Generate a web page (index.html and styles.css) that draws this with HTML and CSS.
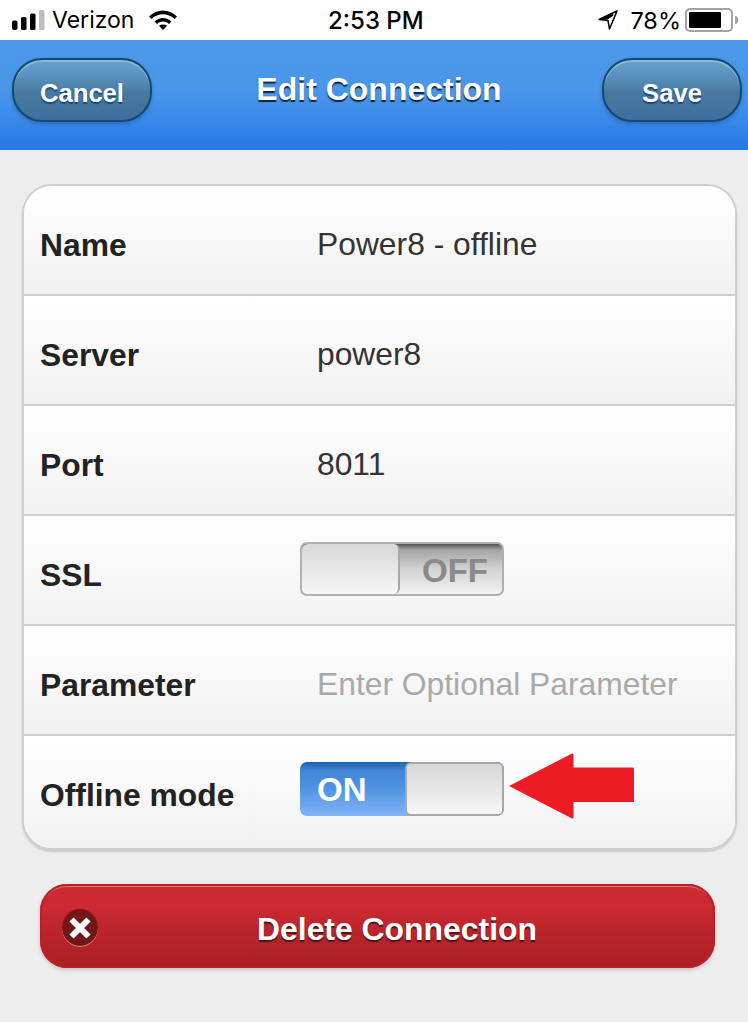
FILE: index.html
```html
<!DOCTYPE html>
<html lang="en">
<head>
<meta charset="utf-8">
<title>Edit Connection</title>
<link rel="stylesheet" href="styles.css">
</head>
<body>
<div class="status">
  <div class="status-left">
    <svg class="signal" width="34" height="22" viewBox="0 0 34 22"><rect x="0" y="11.500" width="5.500" height="9.500" rx="2" fill="#000"/><rect x="9" y="8" width="5.500" height="13" rx="1.500" fill="#000"/><rect x="18" y="4.500" width="5.500" height="16.500" rx="1.500" fill="#000"/><rect x="27" y="1" width="5.500" height="20" rx="1.500" fill="#bdbdbd"/></svg>
    <span class="carrier">Verizon</span>
    <svg class="wifi" width="30" height="22" viewBox="0 0 30 22"><path d="M1 7.500C9-.5 21-.5 29 7.500L26.500 10C19.800 3.800 10.200 3.800 3.500 10Z" fill="#000"/><path d="M6.500 12.500C11.500 7.800 18.500 7.800 23.500 12.500L21 15C17 11.800 13 11.800 9 15Z" fill="#000"/><path d="M11 16.800C13.500 14.900 16.500 14.900 19 16.800L15 21Z" fill="#000"/></svg>
  </div>
  <div class="clock">2:53 PM</div>
  <div class="status-right">
    <svg class="loc" width="20" height="20" viewBox="0 0 20 20"><path d="M19 1L1 9.500L10 10.500L11.500 19Z M14.800 5L9.500 8.500L4.500 8.700Z" fill="none" stroke="#000" stroke-width="1.500" stroke-linejoin="round"/></svg>
    <span class="pct">78%</span>
    <span class="battery"><span class="battery-fill"></span></span>
    <span class="battery-tip"></span>
  </div>
</div>

<header class="topbar">
  <button class="nav-btn">Cancel</button>
  <h1 class="title">Edit Connection</h1>
  <button class="nav-btn">Save</button>
</header>

<main class="content">
  <section class="card">
    <div class="row"><div class="label">Name</div><div class="value">Power8 - offline</div></div>
    <div class="row"><div class="label">Server</div><div class="value">power8</div></div>
    <div class="row"><div class="label">Port</div><div class="value">8011</div></div>
    <div class="row"><div class="label">SSL</div>
      <div class="toggle toggle-off"><span class="knob"></span><span class="toggle-text">OFF</span></div>
    </div>
    <div class="row"><div class="label">Parameter</div><div class="value placeholder">Enter Optional Parameter</div></div>
    <div class="row"><div class="label">Offline mode</div>
      <div class="toggle toggle-on"><span class="toggle-text">ON</span><span class="knob"></span></div>
    </div>
  </section>

  <button class="delete">
    <span class="delete-icon"><svg width="24" height="24" viewBox="0 0 24 24"><path d="M12 12L3.500 3.500M12 12L20.500 3.500M12 12L3.500 20.500M12 12L20.500 20.500" stroke="#fff" stroke-width="6" fill="none"/></svg></span>
    <span class="delete-text">Delete Connection</span>
  </button>
</main>

<svg class="arrow" width="128" height="68" viewBox="0 0 128 68"><path d="M1 34L64 1.500Q65.500 1 65.500 3V15.500H125Q126 15.500 126 17V50H65.500V65Q65.500 67 64 66.500Z" fill="#ed1c24"/></svg>
</body>
</html>
```
FILE: styles.css
```css
* { box-sizing: border-box; }
html, body { margin: 0; padding: 0; }
body {
  width: 748px;
  height: 1022px;
  overflow: hidden;
  position: relative;
  background: #ededed;
  font-family: "Liberation Sans", Arial, sans-serif;
}
.status {
  height: 40px;
  background: #fff;
  display: flex;
  align-items: center;
  justify-content: space-between;
  color: #000;
  position: relative;
}
.status-left { display: flex; align-items: center; padding-left: 12px; }
.carrier { margin-left: 6px; font-family: "Inter", "Liberation Sans", sans-serif; font-size: 23px; }
.wifi { margin-left: 14px; }
.clock {
  position: absolute;
  left: 328px;
  top: 6px;
  font-family: "Inter", "Liberation Sans", sans-serif;
  font-weight: 500;
  font-size: 24px;
}
.status-right { display: flex; align-items: center; padding-right: 10px; }
.pct { margin-left: 12px; font-family: "Inter", "Liberation Sans", sans-serif; font-size: 23.500px; }
.battery {
  margin-left: 4px;
  width: 48px;
  height: 24px;
  border: 2px solid #a3a3a3;
  border-radius: 5px;
  padding: 2px;
  display: block;
}
.battery-fill { display: block; width: 32px; height: 16px; background: #000; border-radius: 1px; }
.battery-tip {
  width: 3px;
  height: 8px;
  margin-left: 2px;
  background: #a3a3a3;
  border-radius: 0 3px 3px 0;
}
.topbar {
  height: 110px;
  background: linear-gradient(#4b97e8 0%, #4a97ea 45%, #3c8aea 70%, #2478e4 100%);
  display: flex;
  justify-content: space-between;
  align-items: flex-start;
  padding: 18px 6px 0 12px;
}
.nav-btn {
  width: 140px;
  height: 64px;
  border: 2px solid #0f4a70;
  border-radius: 30px;
  background: linear-gradient(#6aa0cb 0%, #5a93c0 25%, #47799f 55%, #3f6e9e 100%);
  box-shadow: inset 0 2px 0 rgba(255,255,255,.25), 0 2px 4px rgba(0,0,0,.2);
  color: #fff;
  font: bold 25.600px "Liberation Sans", Arial, sans-serif;
  text-shadow: 0 2px 1px rgba(10,50,100,.7);
  padding: 7px 0 0;
}
.title {
  margin: 0 0 0 4px;
  padding-top: 12px;
  color: #fff;
  font-size: 32px;
  font-weight: bold;
  line-height: 38px;
  text-shadow: 0 2px 1px rgba(0,0,0,.75);
}
.content { padding: 34px 11px 0 22px; }
.card {
  height: 666px;
  background: #fff;
  border: 2px solid #cfcfcf;
  border-radius: 30px;
  overflow: hidden;
  box-shadow: 0 2px 2px rgba(0,0,0,.14);
}
.row {
  height: 110px;
  display: flex;
  align-items: center;
  background: linear-gradient(#fff, #f1f1f1);
  border-bottom: 2px solid #cfcfcf;
  padding-left: 16px;
  position: relative;
}
.row:last-child { border-bottom: 0; height: 112px; }
.label {
  width: 260px;
  color: #222;
  font-size: 31.800px;
  font-weight: bold;
  padding-top: 10px;
}
.row:last-child .label { padding-top: 6px; }
.value {
  margin-left: 17px;
  color: #333;
  font-size: 31.800px;
  padding-top: 9px;
}
.placeholder { color: #a9a9a9; }
.toggle {
  width: 204px;
  height: 54px;
  border-radius: 7px;
  border: 2px solid #b2b2b2;
  display: flex;
  overflow: hidden;
  font-weight: bold;
  font-size: 33px;
  margin-top: -2px;
}
.toggle .knob {
  display: block;
  border: 2px solid #a8a8a8;
  border-radius: 6px;
  background: linear-gradient(#d8d8d8, #f6f6f6);
  height: 100%;
}
.toggle-off { background: linear-gradient(#555 0, #a5a5a5 12%, #d2d2d2 50%, #f3f3f3 100%); border-color: #b0b0b0; }
.toggle-off .knob { width: 98px; border-width: 0 2px 0 0; }
.toggle-off .toggle-text { color: #8a8a8a; margin-left: 22px; line-height: 54px; }
.toggle-on { background: linear-gradient(#1d5fa8 0, #3f86d8 15%, #4f94e2 50%, #82b3f6 100%); border: 0; margin-top: -6px; }
.toggle-on .toggle-text { color: #fff; width: 105px; padding-left: 17px; line-height: 56px; }
.toggle-on .knob { width: 99px; }
.delete {
  display: flex;
  align-items: center;
  width: 675px;
  height: 84px;
  margin: 34px 0 0 18px;
  position: relative;
  border: 0;
  border-radius: 27px;
  background: linear-gradient(#cf2a32 0%, #cb2831 30%, #b42329 70%, #a92126 100%);
  box-shadow: inset 0 0 0 2px #bb2029, inset 0 4px 0 -1px #e0737a, 0 2px 4px rgba(0,0,0,.18);
  color: #fff;
  font: bold 31.900px "Liberation Sans", Arial, sans-serif;
  text-shadow: 0 2px 1px rgba(40,20,20,.8);
  padding: 0;
}
.delete-text { padding-top: 6px; }
.delete-icon {
  width: 36px;
  height: 37px;
  margin: 3px 159px 0 22px;
  border-radius: 50%;
  background: #731519;
  box-shadow: 0 1px 0 #d98387;
  display: flex;
  align-items: center;
  justify-content: center;
}
.arrow { position: absolute; left: 508px; top: 752px; }
```
